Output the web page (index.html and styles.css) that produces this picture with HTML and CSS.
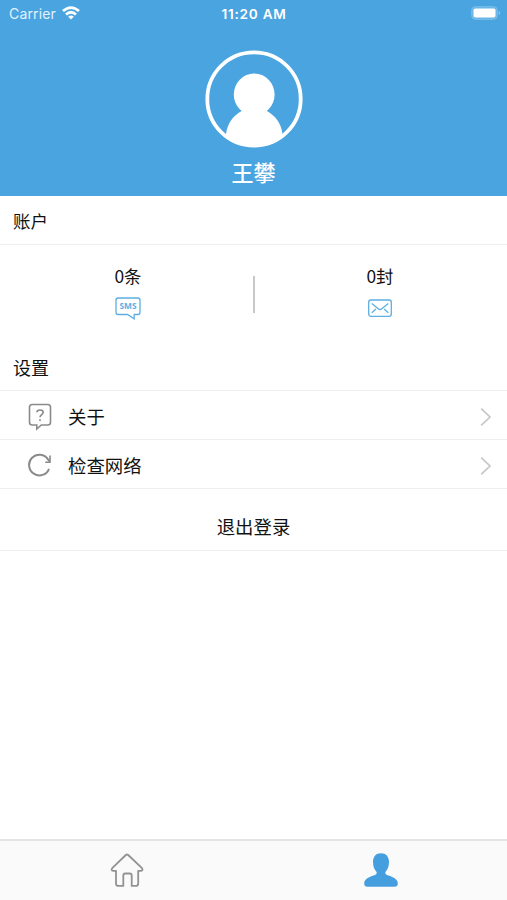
FILE: index.html
```html
<!DOCTYPE html>
<html lang="zh-CN">
<head>
<meta charset="utf-8">
<title>账户</title>
<link rel="stylesheet" href="styles.css">
</head>
<body>
<div class="app">
  <header class="hero">
    <div class="status">
      <div class="carrier"><span>Carrier</span>
        <svg width="18" height="14" viewBox="0 0 18 14" fill="none" stroke="#fff" stroke-width="2.7"><path d="M1 5.1Q9-2 17 5.1"/><path d="M4 8.4Q9 4.1 14 8.4"/><path d="M6.2 10.8Q9 8.3 11.8 10.8L9 13.6z" fill="#fff" stroke="none"/></svg>
      </div>
      <span class="time">11:20 AM</span>
      <svg class="battery" width="30" height="14" viewBox="0 0 30 14"><rect x=".7" y=".7" width="25.6" height="12.6" rx="3.6" fill="#69b5e7" stroke="#7bbfea"/><rect x="2.5" y="2.5" width="22" height="9" rx="1.8" fill="#fff"/><path d="M27.8 4.8q2.8 2.2 0 4.4z" fill="#8dc8ee"/></svg>
    </div>
    <svg class="avatar" width="98" height="98" viewBox="0 0 98 98"><defs><clipPath id="disc"><circle cx="49" cy="49" r="47"/></clipPath></defs><g fill="#fff" clip-path="url(#disc)"><ellipse cx="49.2" cy="44.5" rx="20.4" ry="21"/><path d="M36.5 61C28 66 22.5 73 21 84V98H77.5V84C76 73 70.5 66 62 61z"/></g><circle cx="49" cy="49" r="46.7" fill="none" stroke="#fff" stroke-width="3.8"/></svg>
    <div class="name">王攀</div>
  </header>
  <main>
    <h2 class="heading account">账户</h2>
    <section class="stats">
      <div class="stat sms-stat"><span>0条</span>
        <svg width="26" height="23" viewBox="0 0 26 23" fill="none" stroke="#5eaee4" stroke-width="1.3"><path d="M3.2 1H22.8Q25 1 25 3.2V15.3Q25 17.5 22.8 17.5H19.2V21.8L12.5 17.5H3.2Q1 17.5 1 15.3V3.2Q1 1 3.2 1z"/><text x="13" y="11.8" class="sms">SMS</text></svg>
      </div>
      <i class="divider"></i>
      <div class="stat mail-stat"><span>0封</span>
        <svg width="26" height="23" viewBox="0 0 26 23" fill="none" stroke="#5eaee4" stroke-width="1.3"><rect x="1.7" y="3" width="22.6" height="16.3" rx="2.2"/><path d="M4.8 6.5L11.2 11.7Q13 13.3 14.8 11.7L21.3 6.5M4.8 15.8L8.9 12M21.3 15.8L17.1 12"/></svg>
      </div>
    </section>
    <h2 class="heading settings">设置</h2>
    <div class="row">
      <svg class="icon" width="24" height="28" viewBox="0 0 24 28" fill="none" stroke="#8b8b8b" stroke-width="1.6"><path d="M4.3 1.5H19.7Q22.5 1.5 22.5 4.3V19.2Q22.5 22 19.7 22H13.3L8.8 26V22H4.3Q1.5 22 1.5 19.2V4.3Q1.5 1.5 4.3 1.5z"/><path d="M8.8 9.2C9 6.2 15.2 6.1 15.2 9.3C15.2 11.6 12 11.6 12 14.3M12 16.2V18"/></svg>
      <span>关于</span>
      <svg class="chevron" width="12" height="20" viewBox="0 0 12 20"><path d="M1.2 1.7L10 10L1.2 18.3"/></svg>
    </div>
    <div class="row">
      <svg class="icon" width="24" height="28" viewBox="0 0 24 28" fill="none" stroke="#8b8b8b" stroke-width="2"><path d="M21 16.8A10.3 10.3 0 1 1 20 7.4L21.6 9.4"/><path d="M22 3.4V10.2H17.2" stroke-width="1.6"/></svg>
      <span>检查网络</span>
      <svg class="chevron" width="12" height="20" viewBox="0 0 12 20"><path d="M1.2 1.7L10 10L1.2 18.3"/></svg>
    </div>
    <div class="logout">退出登录</div>
  </main>
  <nav class="tabs">
    <div class="tab"><svg width="36" height="36" viewBox="0 0 36 36" fill="none" stroke="#929292" stroke-width="1.8" stroke-linejoin="round"><path d="M16.8 3Q18 2 19.2 3L33 16.2Q34.5 18.5 32 18.8H29.2V31.4Q29.2 33.9 26.7 33.9H22.7V23.5Q22.7 21.5 20.7 21.5H16.3Q14.3 21.5 14.3 23.5V33.9H9.5Q7 33.9 7 31.4V18.8H4.2Q1.7 18.5 3.2 16.2z"/></svg></div>
    <div class="tab"><svg width="36" height="36" viewBox="0 0 36 36" fill="#459fdf"><path d="M18 1.2C23 1.2 26 4.6 26 10C26 14.3 24.7 17.7 22.4 20C21.8 22 23.2 22.7 25.5 23.5C32 25.7 34.8 27.8 34.8 31.5Q34.8 34.8 31.5 34.8H4.5Q1.2 34.8 1.2 31.5C1.2 27.8 4 25.7 10.5 23.5C12.8 22.7 14.2 22 13.6 20C11.3 17.7 10 14.3 10 10C10 4.6 13 1.2 18 1.2z"/></svg></div>
  </nav>
</div>
</body>
</html>
```
FILE: styles.css
```css
* { box-sizing: border-box; }
body {
  margin: 0;
  background: #fff;
  color: #111;
  font-family: "Noto Sans CJK SC", sans-serif;
  font-size: 18.4px;
}
svg { display: block; flex: none; }
.app { height: 900px; display: flex; flex-direction: column; }
.hero {
  height: 196px;
  background: #4aa4e0;
  color: #fff;
  display: flex;
  flex-direction: column;
  align-items: center;
}
.status {
  width: 100%;
  height: 27px;
  padding: 0 6px 0 9px;
  display: grid;
  grid-template-columns: 1fr auto 1fr;
  align-items: center;
  font-family: Inter, sans-serif;
  font-size: 14px;
}
.carrier { display: flex; align-items: center; gap: 6px; color: #e1f3ff; letter-spacing: .15px; }
.carrier svg { margin-top: -1px; }
.time { margin-right: 2px; font-size: 13.6px; font-weight: 600; letter-spacing: .75px; }
.battery { justify-self: end; margin-top: -1px; }
.avatar { margin-top: 23px; }
.name { margin-top: 8px; font-size: 22px; line-height: 30px; font-weight: 500; }
main { flex: 1; }
.heading { margin: 0; padding-left: 13px; font-size: 18px; font-weight: 400; border-bottom: 1px solid #efefef; }
.account { height: 49px; line-height: 49px; font-size: 17.5px; }
.settings { height: 47px; line-height: 46px; }
.stats { height: 99px; display: flex; }
.stat {
  flex: 1;
  display: flex;
  flex-direction: column;
  align-items: center;
  padding-top: 19px;
  font-size: 17.4px;
  line-height: 24px;
}
.stat svg { margin-top: 9px; }
.sms-stat { padding-left: 3px; }
.mail-stat { padding-right: 2px; }
.divider { width: 2px; height: 37px; margin-top: 31px; background: #c8c8c8; }
.sms { font: 700 8.4px "Open Sans", sans-serif; text-anchor: middle; fill: #5eaee4; stroke: none; }
.row {
  height: 49px;
  padding: 0 15px 0 28px;
  display: flex;
  align-items: center;
  border-bottom: 1px solid #efefef;
}
.row span { margin-left: 16px; flex: 1; line-height: 48px; padding-top: 1px; }
.icon { margin-top: 4px; }
.chevron { margin-top: 3px; fill: none; stroke: #c7c7c7; stroke-width: 1.7; }
.logout { height: 62px; padding-top: 13px; line-height: 48px; text-align: center; border-bottom: 1px solid #efefef; }
.tabs { height: 61px; display: flex; background: #fafafa; border-top: 2px solid #e4e4e4; }
.tab { flex: 1; display: flex; justify-content: center; padding: 11px 0 0 1px; }
```
